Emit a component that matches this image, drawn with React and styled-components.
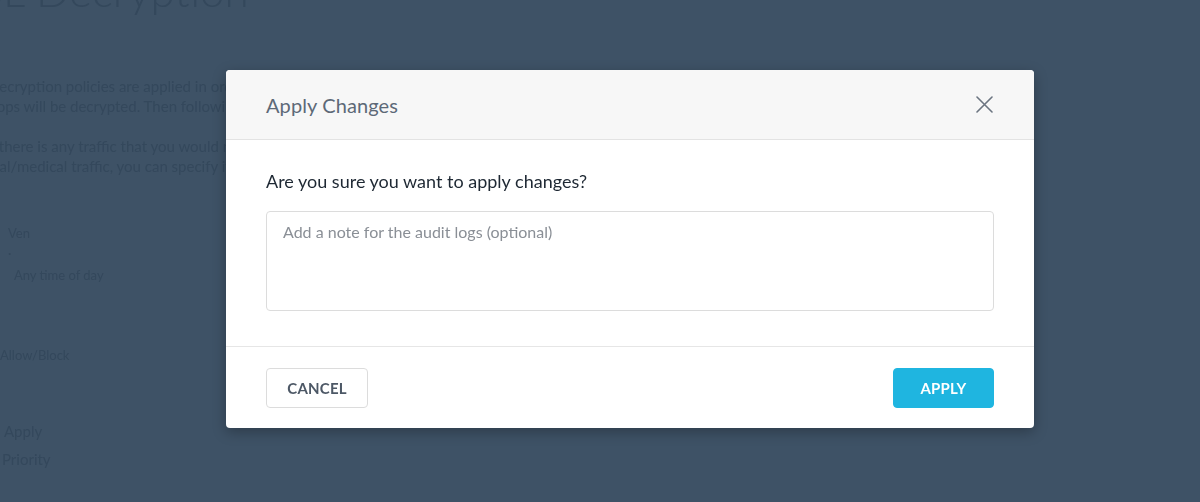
import React from "react";
import styled, { createGlobalStyle } from "styled-components";

const Global = createGlobalStyle`
  html, body { margin: 0; padding: 0; }
  body {
    width: 1200px;
    height: 502px;
    overflow: hidden;
    background: #3e5266;
    font-family: Lato, "Open Sans", sans-serif;
  }
`;

const Page = styled.div`
  height: 502px;
  overflow: hidden;
  color: #34485c;
  font-family: Lato, sans-serif;
  filter: blur(0.5px);
`;

const Heading = styled.h1`
  margin: -36px 0 0 -44px;
  font-size: 44px;
  font-weight: 300;
  line-height: 52px;
  white-space: nowrap;
`;

const Para = styled.div`
  margin: ${(p) => p.$top}px 0 0 ${(p) => p.$left}px;
  width: ${(p) => 226 - p.$left}px;
  overflow: hidden;
  font-size: 15px;
  line-height: 20px;
  white-space: nowrap;
`;

const Label = styled.div`
  margin: ${(p) => p.$top}px 0 0 ${(p) => p.$left}px;
  font-size: ${(p) => p.$size || 13}px;
  line-height: 18px;
  white-space: nowrap;
`;

const Overlay = styled.div`
  position: fixed;
  inset: 0;
  display: flex;
  justify-content: center;
  align-items: flex-start;
  padding: 70px 0 0 60px;
`;

const Modal = styled.div`
  width: 808px;
  background: #ffffff;
  border-radius: 4px;
  box-shadow: 0 4px 14px rgba(0, 0, 0, 0.28);
  overflow: hidden;
  display: flex;
  flex-direction: column;
`;

const Header = styled.div`
  height: 69px;
  background: #f7f7f7;
  border-bottom: 1px solid #e3e3e3;
  display: flex;
  align-items: center;
  justify-content: space-between;
  padding: 0 40px;
`;

const Title = styled.h2`
  margin: 0;
  font-size: 20px;
  font-weight: 400;
  color: #5d6977;
  letter-spacing: 0.1px;
`;

const CloseButton = styled.button`
  border: none;
  background: none;
  padding: 0;
  width: 18px;
  height: 18px;
  display: flex;
  align-items: center;
  justify-content: center;
  cursor: pointer;
  margin-right: 1px;
`;

const Body = styled.div`
  padding: 30px 40px 35px;
  border-bottom: 1px solid #e6e6e6;
`;

const Question = styled.p`
  margin: 0 0 19px;
  font-size: 18px;
  line-height: 22px;
  color: #1e2833;
`;

const Note = styled.textarea`
  display: block;
  box-sizing: border-box;
  width: 100%;
  height: 100px;
  resize: none;
  border: 1px solid #dcdcdc;
  border-radius: 4px;
  padding: 9px 16px;
  font-family: Lato, sans-serif;
  font-size: 16px;
  line-height: 22px;
  color: #333;
  outline: none;
  &::placeholder { color: #8a8f96; }
`;

const Footer = styled.div`
  padding: 21px 40px 20px;
  display: flex;
  justify-content: space-between;
  align-items: center;
`;

const Button = styled.button`
  height: 40px;
  width: ${(p) => p.$w}px;
  border-radius: 4px;
  font-family: Lato, sans-serif;
  font-size: 15px;
  font-weight: 700;
  letter-spacing: 0.2px;
  text-transform: uppercase;
  cursor: pointer;
  border: 1px solid ${(p) => (p.$primary ? "#1fb5e0" : "#dcdcdc")};
  background: ${(p) => (p.$primary ? "#1fb5e0" : "#ffffff")};
  color: ${(p) => (p.$primary ? "#ffffff" : "#4d5866")};
`;

export default function App() {
  return (
    <>
      <Global />
      <Page>
        <Heading>SSL Decryption</Heading>
        <Para $top={60} $left={-12}>Decryption policies are applied in order from top to bottom.</Para>
        <Para $top={0} $left={-28}>laptops will be decrypted. Then following rules apply to the rest.</Para>
        <Para $top={20} $left={-14}>If there is any traffic that you would not like to decrypt, such as</Para>
        <Para $top={0} $left={-44}>financial/medical traffic, you can specify it below.</Para>
        <Label $top={48} $left={8}>Ven</Label>
        <Label $top={2} $left={8}>·</Label>
        <Label $top={4} $left={14}>Any time of day</Label>
        <Label $top={62} $left={0}>Allow/Block</Label>
        <Label $top={58} $left={4} $size={15}>Apply</Label>
        <Label $top={10} $left={2} $size={15}>Priority</Label>
      </Page>
      <Overlay>
        <Modal role="dialog" aria-label="Apply Changes">
          <Header>
            <Title>Apply Changes</Title>
            <CloseButton aria-label="Close">
              <svg width="17" height="17" viewBox="0 0 17 17" fill="none">
                <path d="M1 1 L16 16 M16 1 L1 16" stroke="#6b7480" strokeWidth="1.6" strokeLinecap="round" />
              </svg>
            </CloseButton>
          </Header>
          <Body>
            <Question>Are you sure you want to apply changes?</Question>
            <Note placeholder="Add a note for the audit logs (optional)" />
          </Body>
          <Footer>
            <Button $w={102}>Cancel</Button>
            <Button $w={101} $primary>Apply</Button>
          </Footer>
        </Modal>
      </Overlay>
    </>
  );
}
